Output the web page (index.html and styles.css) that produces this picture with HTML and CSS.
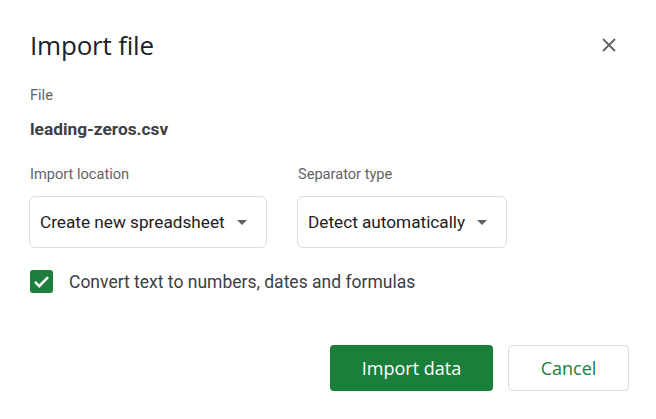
FILE: index.html
```html
<!DOCTYPE html>
<html>
<head>
<meta charset="utf-8">
<link rel="stylesheet" href="styles.css">
</head>
<body>
<div class="dialog">
  <div class="header">
    <h1 class="title">Import file</h1>
    <button class="close" aria-label="Close">
      <svg width="14" height="14" viewBox="0 0 14 14"><path d="M1 1L13 13M13 1L1 13" stroke="#5f6368" stroke-width="1.8" fill="none"/></svg>
    </button>
  </div>
  <div class="label file-label">File</div>
  <div class="filename">leading-zeros.csv</div>
  <div class="fields">
    <div class="field">
      <div class="label">Import location</div>
      <div class="select select-loc"><span class="select-text">Create new spreadsheet</span><span class="caret"></span></div>
    </div>
    <div class="field">
      <div class="label">Separator type</div>
      <div class="select select-sep"><span class="select-text">Detect automatically</span><span class="caret"></span></div>
    </div>
  </div>
  <label class="check-row">
    <span class="checkbox">
      <svg width="19" height="19" viewBox="0 0 19 19"><path d="M3 9.8L7.3 14.1L16 5.2" stroke="#fff" stroke-width="2.6" fill="none"/></svg>
    </span>
    <span class="check-text">Convert text to numbers, dates and formulas</span>
  </label>
  <div class="actions">
    <button class="btn primary">Import data</button>
    <button class="btn secondary">Cancel</button>
  </div>
</div>
</body>
</html>
```
FILE: styles.css
```css
* { box-sizing: border-box; }
html, body { margin: 0; background: #fff; }
body { font-family: Roboto, "Noto Sans", Arial, sans-serif; color: #202124; }
.dialog { width: 656px; height: 419px; padding: 27px 27px 0 30px; }
.header { display: flex; justify-content: space-between; align-items: flex-start; }
.title { margin: 0; font-family: "Open Sans", Roboto, sans-serif; font-size: 26px; font-weight: 400; line-height: 36px; color: #202124; letter-spacing: -0.2px; }
.close { border: 0; background: none; padding: 0; margin: 11px 13px 0 0; width: 14px; height: 14px; display: flex; }
.label { font-size: 14.6px; line-height: 20px; color: #5f6368; }
.file-label { margin-top: 22px; }
.filename { margin-top: 13px; font-size: 17.3px; font-weight: 700; line-height: 22px; color: #3c4043; }
.fields { display: flex; gap: 30px; margin-top: 24px; margin-left: -1px; }
.field { display: flex; flex-direction: column; }
.field .label { margin-left: 1px; }
.select { margin-top: 12px; height: 52px; border: 1px solid #dadce0; border-radius: 6px; display: flex; align-items: center; padding: 0 19px 0 10px; font-size: 17.2px; color: #202124; gap: 8px; white-space: nowrap; }
.select-text { white-space: nowrap; }
.select-loc { width: 238px; }
.select-sep { width: 210px; }
.caret { flex: none; width: 0; height: 0; border-left: 5px solid transparent; border-right: 5px solid transparent; border-top: 5px solid #5f6368; margin-left: auto; margin-top: 1px; }
.check-row { display: flex; align-items: center; margin-top: 22px; gap: 16px; }
.checkbox { width: 23px; height: 23px; border-radius: 3px; background: #1e7e3e; display: flex; align-items: center; justify-content: center; }
.check-text { font-size: 17.5px; color: #3c4043; }
.actions { display: flex; justify-content: flex-end; gap: 15px; margin-top: 52px; padding-right: 0; }
.btn { height: 46px; border-radius: 4px; font-family: "Open Sans", Roboto, sans-serif; font-size: 18px; font-weight: 500; cursor: pointer; }
.primary { width: 163px; background: #1a7f3b; color: #fff; border: 0; }
.secondary { width: 121px; background: #fff; color: #18803c; border: 1px solid #dadce0; }
```
